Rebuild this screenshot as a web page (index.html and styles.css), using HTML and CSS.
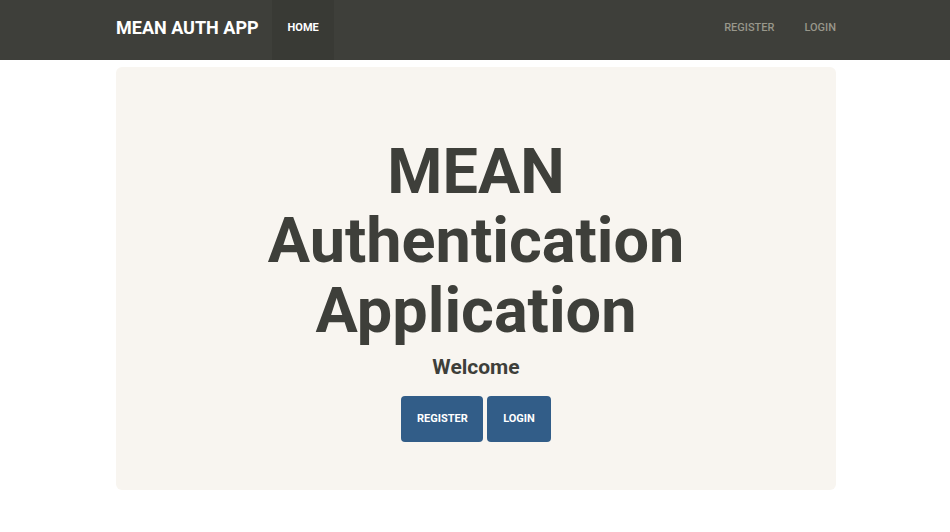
FILE: index.html
```html
<!DOCTYPE html>
<html>
<head>
<meta charset="utf-8">
<title>MEAN Auth App</title>
<link rel="stylesheet" href="styles.css">
</head>
<body>
<nav class="navbar">
  <div class="container nav-inner">
    <a class="brand" href="#">MEAN AUTH APP</a>
    <ul class="nav-left">
      <li><a class="nav-link active" href="#">Home</a></li>
    </ul>
    <ul class="nav-right">
      <li><a class="nav-link" href="#">Register</a></li>
      <li><a class="nav-link" href="#">Login</a></li>
    </ul>
  </div>
</nav>
<main class="container">
  <section class="jumbotron">
    <h1 class="title">MEAN Authentication Application</h1>
    <h3 class="welcome">Welcome</h3>
    <div class="actions">
      <a class="btn btn-register" href="#">Register</a>
      <a class="btn btn-login" href="#">Login</a>
    </div>
  </section>
</main>
</body>
</html>
```
FILE: styles.css
```css
* { box-sizing: border-box; }
html, body { margin: 0; padding: 0; }
body {
  font-family: Roboto, "Helvetica Neue", Arial, sans-serif;
  background: #ffffff;
  color: #3e3f3a;
  font-size: 14px;
  padding-left: 2px;
}
a { text-decoration: none; }
.container {
  width: 720px;
  margin: 0 auto;
}
.navbar {
  background: #3e3f3a;
  height: 60px;
  margin-left: -2px;
  padding-left: 2px;
}
.nav-inner {
  display: flex;
  align-items: stretch;
  height: 60px;
}
.brand {
  color: #ffffff;
  font-weight: 700;
  font-size: 18px;
  line-height: 20px;
  padding: 18px 13px 0 0;
  height: 60px;
}
.nav-left, .nav-right {
  list-style: none;
  margin: 0;
  padding: 0;
  display: flex;
}
.nav-right { margin-left: auto; margin-right: -15px; }
.nav-link {
  display: block;
  height: 60px;
  padding: 18px 15px 0;
  line-height: 20px;
  font-size: 11px;
  font-weight: 500;
  text-transform: uppercase;
  color: #98978b;
}
.nav-right li + li .nav-link { padding-left: 15px; }
.nav-left .nav-link.active {
  color: #ffffff;
  background: #393a35;
  font-weight: 700;
  padding: 18px 15px 0 16px;
}
.jumbotron {
  margin-top: 7px;
  background: #f8f5f0;
  border-radius: 6px;
  padding: 70px 60px 48px;
  text-align: center;
}
.title {
  font-size: 63px;
  line-height: 1.1;
  font-weight: 700;
  margin: 0 auto;
  width: 430px;
  color: #3e3f3a;
}
.welcome {
  font-size: 21px;
  line-height: 26px;
  font-weight: 700;
  margin: 9px 0 0;
}
.actions {
  margin-top: 16px;
  display: flex;
  justify-content: center;
  gap: 4px;
}
.btn {
  display: block;
  height: 46px;
  line-height: 46px;
  padding: 0 16px;
  background: #325d88;
  color: #ffffff;
  border-radius: 4px;
  font-size: 11px;
  font-weight: 700;
  text-transform: uppercase;
}
.btn-register { width: 82px; }
.btn-login { width: 64px; }
```
